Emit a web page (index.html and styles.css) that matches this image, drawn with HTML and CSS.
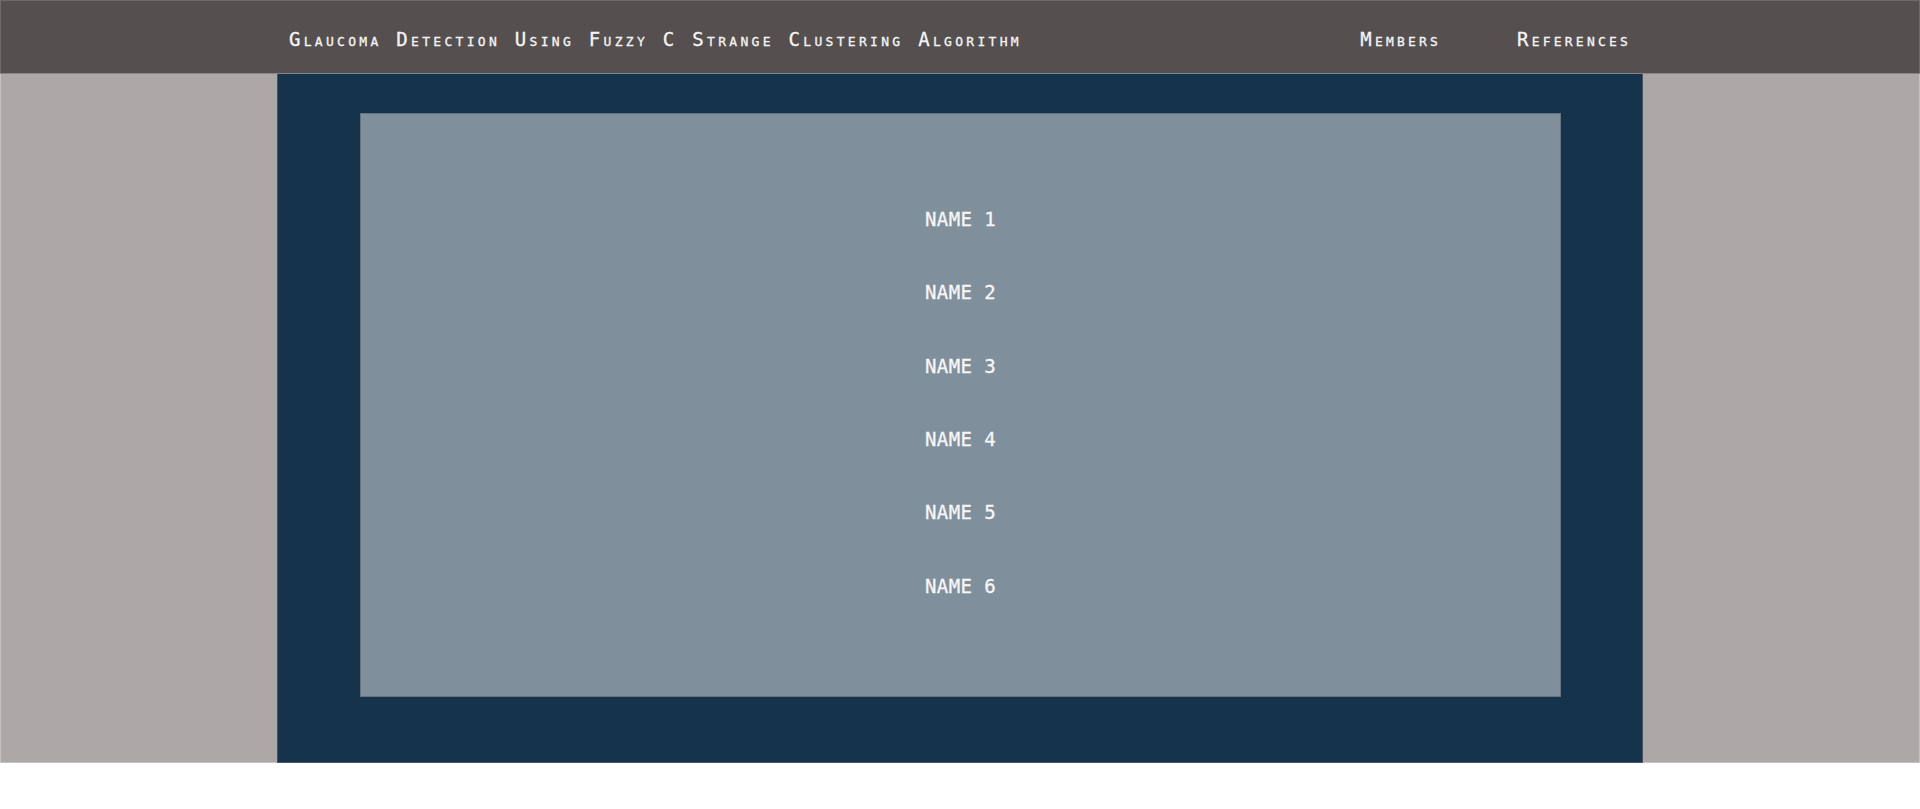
FILE: index.html
```html
<!DOCTYPE html>
<html lang="en">
<head>
<meta charset="utf-8">
<title>Members</title>
<link rel="stylesheet" href="styles.css">
</head>
<body>
<header class="site-header">
  <div class="header-inner">
    <div class="site-title">Glaucoma Detection Using Fuzzy C Strange Clustering Algorithm</div>
    <nav class="site-nav">
      <a class="nav-link" href="#">Members</a>
      <a class="nav-link" href="#">References</a>
    </nav>
  </div>
</header>
<main class="layout">
  <div class="side side-left"></div>
  <section class="panel">
    <div class="card">
      <ul class="names">
        <li>NAME 1</li>
        <li>NAME 2</li>
        <li>NAME 3</li>
        <li>NAME 4</li>
        <li>NAME 5</li>
        <li>NAME 6</li>
      </ul>
    </div>
  </section>
  <div class="side side-right"></div>
</main>
</body>
</html>
```
FILE: styles.css
```css
* { box-sizing: border-box; }
html, body { margin: 0; padding: 0; background: #ffffff; }
body {
  font-family: "DejaVu Sans Mono", "Liberation Mono", monospace;
  color: #f4f4f4;
}
.site-header {
  height: 74px;
  background: #554f4f;
  border: 1px solid #6e6a6a;
  border-bottom: 1px solid #8a8686;
}
.header-inner {
  width: 1366px;
  margin: 0 auto;
  padding: 27px 12px 0 12px;
  display: flex;
  justify-content: space-between;
  align-items: flex-start;
}
.site-title,
.nav-link {
  font-size: 19px;
  font-variant: small-caps;
  letter-spacing: 3.2px;
  line-height: 22px;
  color: #f4f4f4;
  text-decoration: none;
  font-weight: normal;
  -webkit-text-stroke: 0.3px #f4f4f4;
}
.site-title { letter-spacing: 3.3px; }
.site-nav {
  display: flex;
  gap: 76px;
}
.layout {
  display: grid;
  grid-template-columns: 1fr 1366px 1fr;
  height: 689px;
}
.side {
  background: #aca8a7;
  border-bottom: 1px solid #c4c2c2;
}
.side-left { border-left: 1px solid #c4c2c2; }
.side-right { border-right: 1px solid #c4c2c2; }
.panel {
  background: #15344c;
  border-left: 1px solid #4a5561;
  border-right: 1px solid #4a5561;
  border-bottom: 1px solid #4a5561;
  padding: 39px 81px 65px 82px;
}
.card {
  height: 100%;
  background: #808f9c;
  border: 1px solid #66727d;
  display: flex;
  align-items: center;
  justify-content: center;
}
.names {
  list-style: none;
  margin: 0;
  padding: 0 0 4px 0;
  text-align: center;
}
.names li {
  font-size: 19px;
  letter-spacing: 0.4px;
  line-height: 73.3px;
  color: #f6f6f6;
  -webkit-text-stroke: 0.3px #f6f6f6;
}
```
